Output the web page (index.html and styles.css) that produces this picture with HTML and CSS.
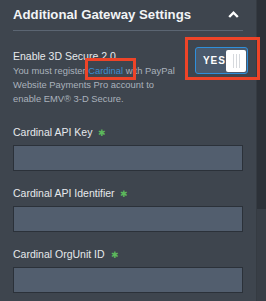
FILE: index.html
```html
<!DOCTYPE html>
<html>
<head>
<meta charset="utf-8">
<link rel="stylesheet" href="styles.css">
</head>
<body>
<div class="frame">
  <div class="panel">
    <div class="header">
      <h2 class="title">Additional Gateway Settings</h2>
      <svg class="chevron" width="11" height="7" viewBox="0 0 11 7"><path d="M1.2 6 L5.5 1.7 L9.8 6" fill="none" stroke="#fff" stroke-width="2.4"/></svg>
    </div>
    <div class="secure">
      <div class="secure-text">
        <div class="secure-label">Enable 3D Secure 2.0</div>
        <p class="desc">You must register <a class="link">Cardinal</a> with PayPal Website Payments Pro account to enable EMV® 3-D Secure.</p>
      </div>
      <div class="toggle">
        <span class="toggle-text">YES</span>
        <span class="knob"><i></i><i></i><i></i></span>
      </div>
    </div>
    <div class="field">
      <label class="label">Cardinal API Key <span class="req">✱</span></label>
      <div class="input"></div>
    </div>
    <div class="field">
      <label class="label">Cardinal API Identifier <span class="req">✱</span></label>
      <div class="input"></div>
    </div>
    <div class="field">
      <label class="label">Cardinal OrgUnit ID <span class="req">✱</span></label>
      <div class="input"></div>
    </div>
    <div class="mark mark-toggle"></div>
    <div class="mark mark-link"></div>
  </div>
  <div class="scrollbar"><div class="thumb"></div></div>
</div>
</body>
</html>
```
FILE: styles.css
```css
html, body {
  margin: 0;
  padding: 0;
  background: #3e454e;
  font-family: "Liberation Sans", Arial, sans-serif;
}
.frame {
  display: flex;
  width: 266px;
  height: 301px;
  overflow: hidden;
}
.panel {
  position: relative;
  width: 231px;
  padding: 0 13px;
}
.header {
  display: flex;
  align-items: center;
  justify-content: space-between;
  height: 30px;
  border-bottom: 1px solid #5b6572;
}
.title {
  margin: 0;
  font-size: 13.2px;
  font-weight: bold;
  color: #f2f4f6;
  line-height: 16px;
}
.chevron {
  margin-right: 4px;
  margin-top: -2px;
}
.secure {
  display: flex;
  justify-content: space-between;
  align-items: flex-start;
  padding-top: 19px;
}
.secure-text {
  width: 166px;
}
.secure-label {
  font-size: 10.5px;
  color: #e6e9ec;
  line-height: 13px;
}
.desc {
  margin: 1px 0 0;
  font-size: 9.4px;
  line-height: 14px;
  color: #aab2bc;
}
.link {
  color: #3d8fd1;
}
.toggle {
  display: flex;
  align-items: center;
  justify-content: space-between;
  box-sizing: border-box;
  width: 53px;
  height: 27px;
  margin-top: -3px;
  margin-right: -5px;
  border: 1.5px solid #2f8fdb;
  border-radius: 3px;
  background: #4a5a6d;
  padding: 0 1px 0 7px;
}
.toggle-text {
  font-size: 10px;
  font-weight: bold;
  letter-spacing: 0.9px;
  color: #fff;
}
.knob {
  display: flex;
  justify-content: center;
  gap: 2px;
  box-sizing: border-box;
  width: 20px;
  height: 22px;
  background: #fff;
  border-radius: 2px;
  padding: 4px 0;
}
.knob i {
  width: 1px;
  background: #d6d9dd;
}
.secure + .field {
  margin-top: 19px;
}
.label {
  display: block;
  font-size: 10.5px;
  color: #e6e9ec;
  line-height: 14px;
}
.req {
  color: #5cb85c;
  font-size: 9px;
  margin-left: 3px;
}
.input {
  box-sizing: border-box;
  height: 26px;
  margin-top: 5px;
  margin-bottom: 15px;
  background: #525e6e;
  border: 1px solid #2b3139;
}
.mark {
  position: absolute;
  border: 3px solid #ee4428;
  box-sizing: border-box;
}
.mark-toggle {
  left: 185px;
  top: 37px;
  width: 75px;
  height: 43px;
}
.mark-link {
  left: 85px;
  top: 58px;
  width: 51px;
  height: 22px;
}
.scrollbar {
  width: 9px;
  background: #383e46;
  border-left: 1px solid #353b42;
}
.thumb {
  height: 209px;
  background: #2c3138;
}
```
